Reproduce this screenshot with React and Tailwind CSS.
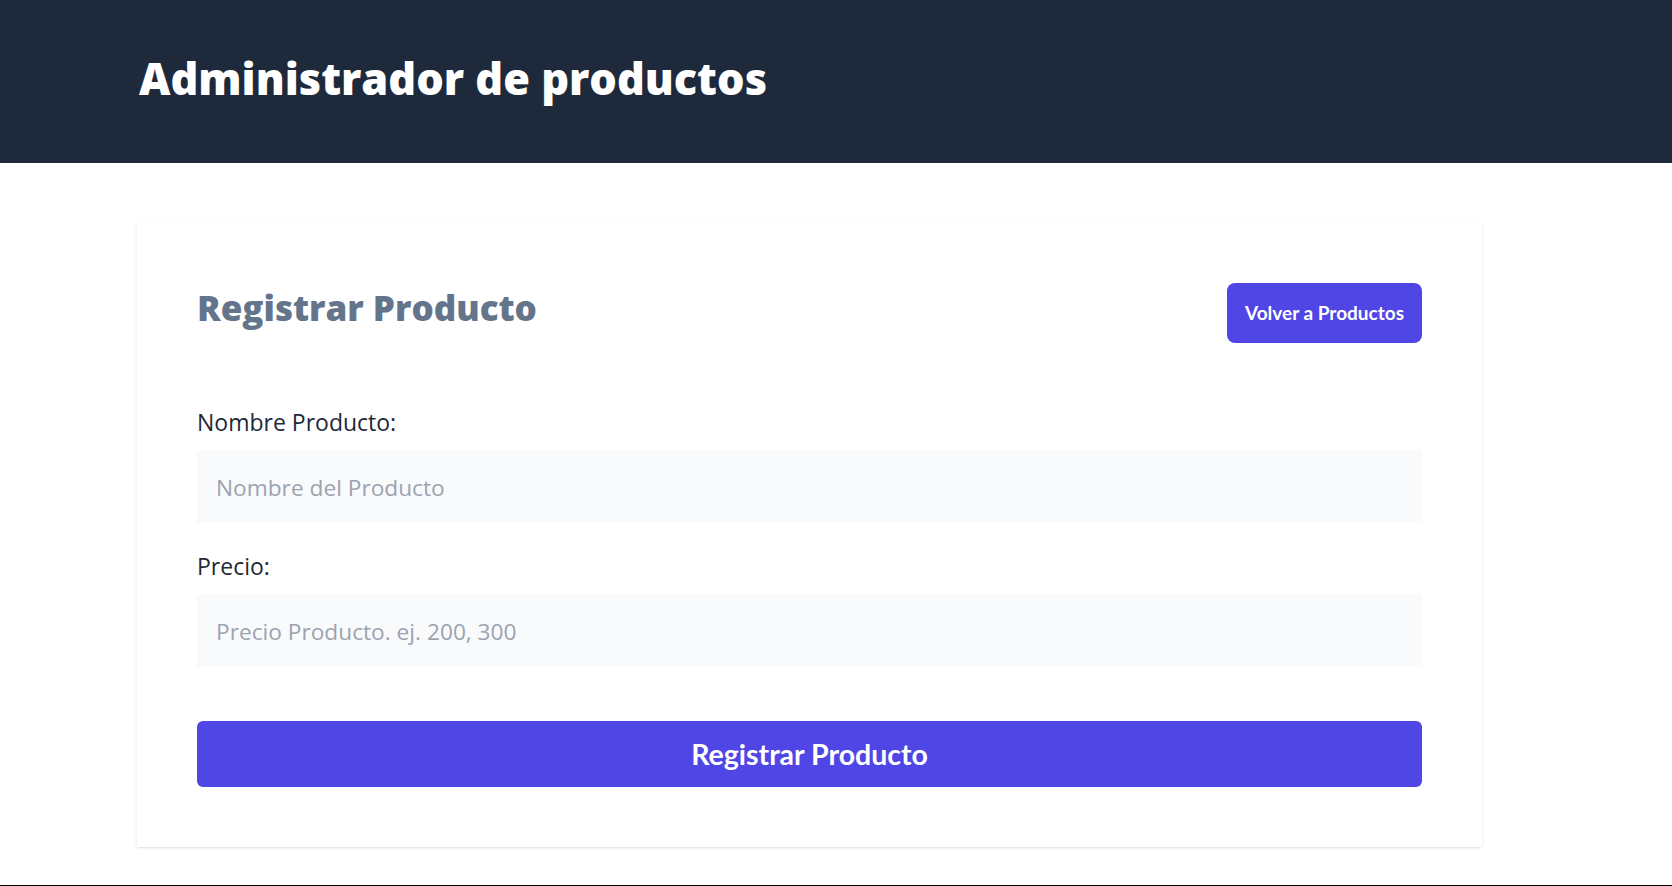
export default function App() {
  const lato = { fontFamily: 'Lato, "Noto Sans", sans-serif' };
  const open = { fontFamily: '"Open Sans", "Noto Sans", sans-serif' };
  return (
    <div className="min-h-[886px] bg-white" style={lato}>
      <header className="h-[163px] bg-[#1e293b] flex items-center pl-[139px] pb-[6px]">
        <h1 className="text-[43.3px] leading-none font-extrabold text-white" style={open}>Administrador de productos</h1>
      </header>
      <main className="pt-[60px]">
        <div className="ml-[137px] w-[1345px] bg-white p-[60px] shadow-[0_1px_3px_0_rgb(0_0_0/0.1),0_1px_2px_-1px_rgb(0_0_0/0.1)]">
          <div className="flex items-start justify-between">
            <h2 className="mt-[7px] text-[35px] leading-none font-extrabold text-[#64748b]" style={open}>Registrar Producto</h2>
            <button className="h-[60px] w-[195px] rounded-lg bg-[#4f46e5] text-[19px] font-bold text-white">Volver a Productos</button>
          </div>
          <form className="mt-[63px]">
            <div>
              <label className="block text-[23px] leading-[32px] text-[#1f2937] mb-[13px]" style={open}>Nombre Producto:</label>
              <input className="block h-[72px] w-full bg-[#f8fafc] pl-[19px] text-[22.7px] text-[#1f2937] placeholder:text-[#9ca3af] outline-none" style={open} placeholder="Nombre del Producto" />
            </div>
            <div className="mt-[27px]">
              <label className="block text-[23px] leading-[32px] text-[#1f2937] mb-[13px]" style={open}>Precio:</label>
              <input className="block h-[72px] w-full bg-[#f8fafc] pl-[19px] text-[22.7px] text-[#1f2937] placeholder:text-[#9ca3af] outline-none" style={open} placeholder="Precio Producto. ej. 200, 300" />
            </div>
            <button type="button" className="mt-[54px] h-[66px] w-full rounded-md bg-[#4f46e5] text-[28.5px] font-bold text-white">Registrar Producto</button>
          </form>
        </div>
        <div className="mt-[38px] h-px bg-black" />
      </main>
    </div>
  );
}
